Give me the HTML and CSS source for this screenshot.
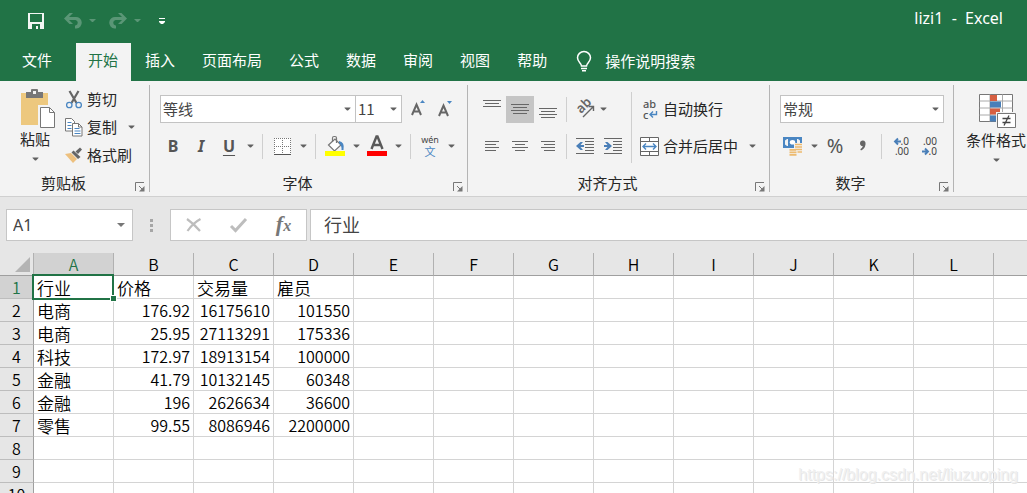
FILE: index.html
```html
<!DOCTYPE html>
<html lang="zh-CN">
<head>
<meta charset="utf-8">
<title>lizi1 - Excel</title>
<link rel="stylesheet" href="styles.css">
</head>
<body>
<svg class="defs" width="0" height="0" aria-hidden="true">
  <symbol id="caret" viewBox="0 0 7 4"><path d="M.5.5h6v.5L4 3.500H3L.5 1z" fill="#606060"/></symbol>
  <symbol id="launch" viewBox="0 0 10 10"><path d="M.5 9V.5H9M4 4l4 4" fill="none" stroke="#777"/><path d="M9.500 4v5.500H4z" fill="#777"/></symbol>
</svg>

<header class="titlebar">
  <div class="quick">
    <button class="qbtn" aria-label="保存"><svg width="16" height="16" viewBox="0 0 16 16"><path d="M0 0h16v16H0z" fill="#f3f6f4"/><path d="M2 1h12v8H2zM4 11h8v5h-2v-3H8v3H4z" fill="#217346"/></svg></button>
    <button class="qbtn undo" aria-label="撤消"><svg width="18" height="16" viewBox="0 0 18 16"><path d="M0 5.500L5.500 0H9L5 4h6.500a5.500 5.500 0 0 1 1 11.500H11V12.500h.5a2.800 2.800 0 0 0 0-5.500H5l4 4H5.500z" fill="#5a9676"/></svg></button>
    <button class="qarrow" aria-label="撤消选项"><svg width="7" height="4" viewBox="0 0 7 4"><path d="M0 0h7L4 3H3z" fill="#5a9676"/></svg></button>
    <button class="qbtn redo" aria-label="恢复"><svg width="18" height="16" viewBox="0 0 18 16"><path d="M18 5.500L12.500 0H9l4 4H6.500a5.500 5.500 0 0 0-1 11.500H7V12.500h-.5a2.800 2.800 0 0 1 0-5.500H13l-4 4h3.500z" fill="#5a9676"/></svg></button>
    <button class="qarrow" aria-label="恢复选项"><svg width="7" height="4" viewBox="0 0 7 4"><path d="M0 0h7L4 3H3z" fill="#5a9676"/></svg></button>
    <button class="qbtn more" aria-label="自定义快速访问工具栏"><svg width="6" height="6" viewBox="0 0 6 6"><path d="M0 0h6v1H0zM0 3h6v1L4 6H2L0 4z" fill="#fff"/></svg></button>
  </div>
  <h1 class="title">lizi1&nbsp; -&nbsp; Excel</h1>
</header>

<nav class="tabs">
  <button class="tab file">文件</button>
  <button class="tab active">开始</button>
  <button class="tab">插入</button>
  <button class="tab">页面布局</button>
  <button class="tab">公式</button>
  <button class="tab">数据</button>
  <button class="tab">审阅</button>
  <button class="tab">视图</button>
  <button class="tab">帮助</button>
  <button class="tell"><svg width="16" height="21" viewBox="0 0 16 21"><path d="M5.500 15c0-3-4-4-4-8.200a6.500 6.200 0 0 1 13 0c0 4.200-4 5.200-4 8.200z" fill="none" stroke="#fff" stroke-width="1.500"/><path d="M5 17.500h6M6 19.800h4" stroke="#fff" stroke-width="1.400"/></svg><span>操作说明搜索</span></button>
</nav>

<main class="ribbon">
  <section class="group clipboard">
    <div class="body">
      <button class="big paste">
        <svg width="40" height="40" viewBox="0 0 40 40"><path d="M6 4h27v32H6z" fill="#edc87e"/><path d="M11 3h5V1q0-1 1-1h5q1 0 1 1v2h5v6H11z" fill="#777"/><path d="M18 2h3v3h-3z" fill="#f3f3f3"/><path d="M23 16h17v24H23z" fill="#f3f3f3"/><path d="M25.500 18.500h9l5 5v15h-14z" fill="#fff" stroke="#777"/><path d="M34.500 18.500v5h5" fill="none" stroke="#777"/></svg>
        <span>粘贴</span><svg class="caret" width="7" height="4"><use href="#caret"/></svg>
      </button>
      <div class="stack">
        <button class="cmd"><span class="ic"><svg width="16" height="19" viewBox="0 0 16 19"><path d="M3.500 1l7 12M12.500 1l-7 12" stroke="#666" stroke-width="2.200"/><circle cx="3.300" cy="15" r="2.700" fill="none" stroke="#4a86c2" stroke-width="1.300"/><circle cx="12.700" cy="15" r="2.700" fill="none" stroke="#4a86c2" stroke-width="1.300"/></svg></span>剪切</button>
        <div class="pair"><button class="cmd"><span class="ic"><svg width="18" height="19" viewBox="0 0 18 19"><path d="M.5.5h6l3 3v9.500h-9z" fill="#fff" stroke="#777"/><path d="M2.500 4.500h4M2.500 7.500h4M2.500 10.500h4" stroke="#4a86c2"/><path d="M7.500 5.500h6l3.500 3.500v9H7.500z" fill="#fff" stroke="#777"/><path d="M13.500 5.500v3.500H17" fill="none" stroke="#777"/><path d="M9.500 10.500h5M9.500 13h6M9.500 15.500h6" stroke="#4a86c2"/></svg></span>复制</button><button class="arrow wide" aria-label="复制选项"><svg width="7" height="4"><use href="#caret"/></svg></button></div>
        <button class="cmd"><span class="ic"><svg width="18" height="16" viewBox="0 0 18 16"><path d="M0 7l6-1 6 6-4 4z" fill="#edc07e"/><path d="M6.500 5.500l2-2 7 6.500-2.500 2z" fill="#666"/><path d="M10.500 4.500L15 .5l2 2-4 4.500z" fill="#666"/></svg></span>格式刷</button>
      </div>
    </div>
    <footer class="foot"><h2>剪贴板</h2><button class="launcher" aria-label="剪贴板设置"><svg width="10" height="10"><use href="#launch"/></svg></button></footer>
  </section>

  <section class="group font">
    <div class="body rows">
      <div class="row">
        <label class="pick fontname"><select aria-label="字体"><option>等线</option></select><svg class="caret" width="7" height="4"><use href="#caret"/></svg></label>
        <label class="pick fontsize"><select aria-label="字号"><option>11</option></select><svg class="caret" width="7" height="4"><use href="#caret"/></svg></label>
        <button class="tool grow" aria-label="增大字号"><svg width="16" height="18" viewBox="0 0 16 18"><path d="M1 15L5.500 4.500L10 15M2.700 11.500h5.600" fill="none" stroke="#666" stroke-width="2"/><path d="M9 3l2.500-3L14 3z" fill="#4a86c2"/></svg></button>
        <button class="tool" aria-label="减小字号"><svg width="16" height="18" viewBox="0 0 16 18"><path d="M0 16L4.500 5.500L9 16M1.700 12.500h5.600" fill="none" stroke="#666" stroke-width="2"/><path d="M8 1h5l-2.500 3z" fill="#4a86c2"/></svg></button>
      </div>
      <div class="row">
        <button class="tool letter" aria-label="加粗">B</button>
        <button class="tool letter ital" aria-label="倾斜">I</button>
        <button class="tool letter under" aria-label="下划线">U</button>
        <button class="arrow" aria-label="下划线选项"><svg width="7" height="4"><use href="#caret"/></svg></button>
        <i class="sep"></i>
        <button class="tool" aria-label="边框"><svg width="17" height="17" viewBox="0 0 17 17"><path d="M0 0h17v17H0z" fill="#fff"/><path d="M0 .5h17M0 8.500h17M.5 0v16M8.500 0v16M16.500 0v16" fill="none" stroke="#777" stroke-dasharray="1 1"/><path d="M0 16.500h17" stroke="#555"/></svg></button>
        <button class="arrow" aria-label="边框选项"><svg width="7" height="4"><use href="#caret"/></svg></button>
        <i class="sep"></i>
        <button class="tool" aria-label="填充颜色"><svg width="20" height="20" viewBox="0 0 20 20"><path d="M3.500 9L10 3l6 6-6.500 6z" fill="#fff" stroke="#777" stroke-width="1.200"/><path d="M7.500 6V2q0-1.500 1.500-1.500h1q1.500 0 1.500 1.500v5" fill="none" stroke="#777" stroke-width="1.200"/><path d="M14 5q6 1 4.500 9h-2q.5-4-2.500-7z" fill="#4a86c2"/><path d="M0 15h20v5H0z" fill="#ff0"/></svg></button>
        <button class="arrow" aria-label="填充颜色选项"><svg width="7" height="4"><use href="#caret"/></svg></button>
        <button class="tool" aria-label="字体颜色"><svg width="20" height="24" viewBox="0 0 20 24"><path d="M4.500 15L9.500 2.500h1L15.500 15M6.500 11h7" fill="none" stroke="#595959" stroke-width="2.400"/><path d="M0 17h20v5H0z" fill="#f00"/></svg></button>
        <button class="arrow" aria-label="字体颜色选项"><svg width="7" height="4"><use href="#caret"/></svg></button>
        <i class="sep"></i>
        <button class="tool wen" aria-label="拼音"><span>wén</span><span class="zi">文</span></button>
        <button class="arrow" aria-label="拼音选项"><svg width="7" height="4"><use href="#caret"/></svg></button>
      </div>
    </div>
    <footer class="foot"><h2>字体</h2><button class="launcher" aria-label="字体设置"><svg width="10" height="10"><use href="#launch"/></svg></button></footer>
  </section>

  <section class="group align">
    <div class="body">
      <div class="rows">
        <div class="row">
          <button class="tool" aria-label="顶端对齐"><svg width="18" height="20" viewBox="0 0 18 20"><path d="M0 1.500h18M2 4.500h14M0 7.500h18" stroke="#666"/></svg></button>
          <button class="tool on" aria-label="垂直居中"><svg width="18" height="20" viewBox="0 0 18 20"><path d="M0 5.500h18M2 8.500h14M0 11.500h18M2 14.500h14" stroke="#666"/></svg></button>
          <button class="tool" aria-label="底端对齐"><svg width="18" height="20" viewBox="0 0 18 20"><path d="M0 9.500h18M2 12.500h14M0 15.500h18M2 18.500h14" stroke="#666"/></svg></button>
          <i class="sep"></i>
          <button class="tool" aria-label="方向"><svg width="20" height="20" viewBox="0 0 20 20"><text x="0" y="0" transform="translate(6 15) rotate(-45)" font-family="Noto Sans" font-size="13" font-weight="600" fill="#666">ab</text><path d="M8 18L18 8M13.500 7.500H18.500V12" fill="none" stroke="#666" stroke-width="1.400"/></svg></button>
          <button class="arrow slim" aria-label="方向选项"><svg width="7" height="4"><use href="#caret"/></svg></button>
        </div>
        <div class="row">
          <button class="tool" aria-label="左对齐"><svg width="14" height="11" viewBox="0 0 14 11"><path d="M0 .5h14M0 3.500h11M0 6.500h14M0 9.500h11" stroke="#666"/></svg></button>
          <button class="tool" aria-label="居中"><svg width="16" height="11" viewBox="0 0 16 11"><path d="M0 .5h16M3 3.500h10M0 6.500h16M3 9.500h10" stroke="#666"/></svg></button>
          <button class="tool" aria-label="右对齐"><svg width="14" height="11" viewBox="0 0 14 11"><path d="M0 .5h14M3 3.500h11M0 6.500h14M3 9.500h11" stroke="#666"/></svg></button>
          <i class="sep"></i>
          <button class="tool" aria-label="减少缩进量"><svg width="18" height="16" viewBox="0 0 18 16"><path d="M0 .5h18M9 3.500h9M9 6.500h9M9 9.500h9M9 12.500h9M0 15.500h18" stroke="#666"/><path d="M0 8l4.500-4H7L4.500 7H8v2H4.500L7 12H4.500z" fill="#4a7fb8"/></svg></button>
          <button class="tool" aria-label="增加缩进量"><svg width="18" height="16" viewBox="0 0 18 16"><path d="M0 .5h18M9 3.500h9M9 6.500h9M9 9.500h9M9 12.500h9M0 15.500h18" stroke="#666"/><path d="M8 8L3.500 4H1l2.500 3H0v2h3.500L1 12h2.500z" fill="#4a7fb8"/></svg></button>
        </div>
      </div>
      <i class="sep tall"></i>
      <div class="rows">
        <div class="row">
          <button class="cmd"><span class="ic wrap"><span>ab</span><span class="second">c<svg width="9" height="7" viewBox="0 0 9 7"><path d="M7.500 0v3.500H1.500M4 .5l-3 3 3 3" fill="none" stroke="#4a86c2" stroke-width="1.400"/></svg></span></span>自动换行</button>
        </div>
        <div class="row">
          <button class="cmd"><span class="ic"><svg width="19" height="19" viewBox="0 0 19 19"><path d="M.5.5h18v18H.5zM.5 4.500h18M.5 14.500h18M9.500 0v4.500M9.500 14.500V19" fill="#fff" stroke="#666"/><path d="M3 9.500h13M6 6.500l-3 3 3 3M13 6.500l3 3-3 3" fill="none" stroke="#4a86c2" stroke-width="1.400"/></svg></span>合并后居中</button>
          <button class="arrow wide" aria-label="合并选项"><svg width="7" height="4"><use href="#caret"/></svg></button>
        </div>
      </div>
    </div>
    <footer class="foot"><h2>对齐方式</h2><button class="launcher" aria-label="对齐设置"><svg width="10" height="10"><use href="#launch"/></svg></button></footer>
  </section>

  <section class="group number">
    <div class="body rows">
      <div class="row">
        <label class="pick numfmt"><select aria-label="数字格式"><option>常规</option></select><svg class="caret" width="7" height="4"><use href="#caret"/></svg></label>
      </div>
      <div class="row">
        <button class="tool" aria-label="会计数字格式"><svg width="20" height="20" viewBox="0 0 20 20"><path d="M0 1h19v11H0z" fill="#4a86c2"/><path d="M2 4.500l2-1.500h11l2 1.500v4l-2 1.500H4L2 8.500z" fill="#f3f3f3"/><path d="M5 2.500h9v8H5z" fill="#4a86c2"/><ellipse cx="9.500" cy="6.200" rx="2.700" ry="2.300" fill="#fff"/><path d="M11 7h8.500v11H14v2H6v-7.500h5z" fill="#f3f3f3"/><path d="M12 8.500h7M12 11h7M12 13.500h7M14.500 16h4.500M6.500 13.800h6.500M6.500 16.300h7M6.500 18.800h7" stroke="#edbb70" stroke-width="1.700"/></svg></button>
        <button class="arrow" aria-label="会计格式选项"><svg width="7" height="4"><use href="#caret"/></svg></button>
        <button class="tool percent" aria-label="百分比样式">%</button>
        <button class="tool" aria-label="千位分隔样式"><svg width="8" height="12" viewBox="0 0 8 12"><path d="M1 3.200Q1.200.5 3.800.5Q7 .8 6.500 4.500Q5.800 9 2 10.500l-.7-1.200Q3.500 8 3.800 6Q1 6 1 3.200z" fill="#666"/></svg></button>
        <i class="sep"></i>
        <button class="tool dec" aria-label="增加小数位数"><span><svg width="7" height="7" viewBox="0 0 7 7"><path d="M1 3.500h6M4 .5l-3 3 3 3" fill="none" stroke="#4a7fb8" stroke-width="1.900"/></svg>.0</span><span>.00</span></button>
        <button class="tool dec" aria-label="减少小数位数"><span>.00</span><span><svg width="7" height="7" viewBox="0 0 7 7"><path d="M0 3.500h6M3 .5l3 3-3 3" fill="none" stroke="#4a7fb8" stroke-width="1.900"/></svg>.0</span></button>
      </div>
    </div>
    <footer class="foot"><h2>数字</h2><button class="launcher" aria-label="数字设置"><svg width="10" height="10"><use href="#launch"/></svg></button></footer>
  </section>

  <section class="group styles">
    <div class="body">
      <button class="big">
        <svg width="40" height="40" viewBox="0 0 40 40"><path d="M3.500 4.500h33v27h-33z" fill="#fff" stroke="#777"/><path d="M3.500 11h33M3.500 18h33M3.500 25h33M14 4.500v27M26.500 4.500v27" stroke="#aaa"/><path d="M14 5h7v6h-7zM14 18.500h10v6H14z" fill="#d65f42"/><path d="M14 11.500h11v6H14zM14 25.500h6v6h-6z" fill="#4a7fb8"/><path d="M20 22h20v17H20z" fill="#f3f3f3"/><path d="M21.500 23.500h18v14h-18z" fill="#fff" stroke="#777"/><path d="M26.500 28.500h8M26.500 32.500h8M33 25.500l-5 10" stroke="#444" stroke-width="1.300"/></svg>
        <span>条件格式</span><svg class="caret" width="7" height="4"><use href="#caret"/></svg>
      </button>
    </div>
  </section>
</main>

<div class="formula">
  <label class="namebox"><input aria-label="名称框" value="A1"><svg width="8" height="4" viewBox="0 0 8 4"><path d="M0 0h8L4 4z" fill="#777"/></svg></label>
  <svg class="dots" width="3" height="13" viewBox="0 0 3 13"><path d="M0 0h3v3H0zM0 5h3v3H0zM0 10h3v3H0z" fill="#a6a6a6"/></svg>
  <div class="fbtns">
    <button class="fbtn" aria-label="取消"><svg width="16" height="14" viewBox="0 0 16 14"><path d="M1 1q7 5 13 12M14.500 1Q7 5 1.500 13" fill="none" stroke="#bdbdbd" stroke-width="2.200"/></svg></button>
    <button class="fbtn" aria-label="输入"><svg width="17" height="14" viewBox="0 0 17 14"><path d="M1 8l4.500 4.500L16 1" fill="none" stroke="#bdbdbd" stroke-width="3"/></svg></button>
    <button class="fbtn fx" aria-label="插入函数"><span>f<small>x</small></span></button>
  </div>
  <input class="finput" aria-label="编辑栏" value="行业">
</div>

<div class="sheet">
  <table class="grid">
    <thead>
      <tr><th class="corner"><svg width="15" height="15" viewBox="0 0 15 15"><path d="M15 0v15H0z" fill="#b4b4b4"/></svg></th><th class="sel">A</th><th>B</th><th>C</th><th>D</th><th>E</th><th>F</th><th>G</th><th>H</th><th>I</th><th>J</th><th>K</th><th>L</th><th></th></tr>
    </thead>
    <tbody>
      <tr><th class="sel">1</th><td class="cur">行业<b class="handle"></b></td><td>价格</td><td>交易量</td><td>雇员</td><td></td><td></td><td></td><td></td><td></td><td></td><td></td><td></td><td></td></tr>
      <tr><th>2</th><td>电商</td><td class="n">176.92</td><td class="n">16175610</td><td class="n">101550</td><td></td><td></td><td></td><td></td><td></td><td></td><td></td><td></td><td></td></tr>
      <tr><th>3</th><td>电商</td><td class="n">25.95</td><td class="n">27113291</td><td class="n">175336</td><td></td><td></td><td></td><td></td><td></td><td></td><td></td><td></td><td></td></tr>
      <tr><th>4</th><td>科技</td><td class="n">172.97</td><td class="n">18913154</td><td class="n">100000</td><td></td><td></td><td></td><td></td><td></td><td></td><td></td><td></td><td></td></tr>
      <tr><th>5</th><td>金融</td><td class="n">41.79</td><td class="n">10132145</td><td class="n">60348</td><td></td><td></td><td></td><td></td><td></td><td></td><td></td><td></td><td></td></tr>
      <tr><th>6</th><td>金融</td><td class="n">196</td><td class="n">2626634</td><td class="n">36600</td><td></td><td></td><td></td><td></td><td></td><td></td><td></td><td></td><td></td></tr>
      <tr><th>7</th><td>零售</td><td class="n">99.55</td><td class="n">8086946</td><td class="n">2200000</td><td></td><td></td><td></td><td></td><td></td><td></td><td></td><td></td><td></td></tr>
      <tr><th>8</th><td></td><td></td><td></td><td></td><td></td><td></td><td></td><td></td><td></td><td></td><td></td><td></td><td></td></tr>
      <tr><th>9</th><td></td><td></td><td></td><td></td><td></td><td></td><td></td><td></td><td></td><td></td><td></td><td></td><td></td></tr>
      <tr><th>10</th><td></td><td></td><td></td><td></td><td></td><td></td><td></td><td></td><td></td><td></td><td></td><td></td><td></td></tr>
    </tbody>
  </table>
  <div class="mark">https://blog.csdn.net/liuzuoping</div>
</div>
</body>
</html>
```
FILE: styles.css
```css
* { box-sizing: border-box; }
body {
  margin: 0;
  height: 100vh;
  display: flex;
  flex-direction: column;
  overflow: hidden;
  background: #fff;
  color: #262626;
  font: 15px/20px "Noto Sans CJK SC", sans-serif;
}
button, input, select {
  margin: 0;
  padding: 0;
  border: 0;
  border-radius: 0;
  background: none;
  color: inherit;
  font: inherit;
}
svg { display: block; flex: none; overflow: visible; }
.defs { position: absolute; }

/* Title bar */
.titlebar {
  flex: none;
  display: flex;
  justify-content: space-between;
  height: 43px;
  padding: 0 24px 2px 28px;
  background: #217346;
  color: #fff;
}
.quick { display: flex; align-items: center; }
.qbtn { display: flex; margin-right: 19px; }
.qbtn:first-child { margin-right: 20px; }
.qbtn.undo, .qbtn.redo { margin-right: 7px; }
.qarrow { display: flex; margin-right: 13px; }
.redo + .qarrow { margin-right: 18px; }
.title { margin: 0; font: 16px/36px "Noto Sans", sans-serif; }

/* Tabs */
.tabs {
  flex: none;
  display: flex;
  height: 38px;
  padding-left: 10px;
  background: #217346;
  color: #fff;
  white-space: nowrap;
}
.tab { flex: none; margin-right: 2px; padding: 0 13px 4px 12px; }
.tab.file { margin-right: 11px; }
.tab.active { background: #f3f3f3; color: #217346; }
.tell { display: flex; align-items: center; gap: 13px; margin-left: 14px; padding-bottom: 2px; flex: none; }

/* Ribbon */
.ribbon {
  flex: none;
  display: flex;
  padding: 4px 0;
  overflow: hidden;
  background: #f3f3f3;
  border-bottom: 1px solid #d0d0d0;
  white-space: nowrap;
}
.group {
  flex: none;
  display: flex;
  flex-direction: column;
  justify-content: space-between;
  height: 107px;
  border-right: 1px solid #b4b4b4;
}
.group.styles { border: 0; }
.clipboard { width: 150px; }
.font { width: 318px; }
.align { width: 302px; }
.number { width: 184px; }
.body { display: flex; padding-left: 10px; }
.rows { display: flex; flex-direction: column; gap: 9px; padding-top: 10px; }
.body.rows { padding-left: 9px; }
.row, .pair { display: flex; align-items: center; height: 28px; }
.foot { display: flex; align-items: flex-end; height: 20px; }
.foot h2 { flex: 1; margin: 0; font-size: 15px; line-height: 18px; font-weight: 400; text-align: center; }
.launcher { display: flex; width: 22px; padding-left: 8px; }
.big { display: flex; flex-direction: column; align-items: center; padding-top: 4px; }
.big .caret { margin-top: 8px; }
.paste { width: 50px; }
.styles .big { margin-left: 2px; padding-top: 5px; }
.stack { display: flex; flex-direction: column; }
.cmd { display: flex; align-items: center; height: 28px; }
.ic { display: flex; justify-content: center; width: 27px; }
.wrap { flex-direction: column; padding-left: 7px; text-align: left; font: 500 11px/11px "Noto Sans", sans-serif; color: #555; }
.second { display: flex; align-items: center; gap: 1px; }
.tool { display: flex; align-items: center; justify-content: center; width: 28px; height: 27px; }
.tool.on { background: #c5c5c5; }
.tool.grow { margin-left: 3px; }
.arrow { display: flex; align-items: center; justify-content: center; width: 14px; height: 27px; }
.arrow.wide { margin-left: 7px; }
.arrow.slim { width: 8px; }
.sep { width: 1px; height: 25px; margin: 0 5px; background: #cfcfcf; }
.align .sep, .number .sep { margin: 0 4px; }
.align .sep.tall { height: 71px; margin-top: 7px; }
.letter { font: 700 16px/24px "Noto Sans", sans-serif; color: #555; }
.ital { font-style: italic; }
.under { text-decoration: underline; text-underline-offset: 3px; text-decoration-thickness: 1px; }
.percent { font: 20px/24px "Noto Sans", sans-serif; color: #555; }
.dec { flex-direction: column; align-items: flex-end; padding-right: 5px; font: 10px/10px "Noto Sans", sans-serif; color: #444; }
.dec span { display: flex; align-items: center; }
.wen { flex-direction: column; font: 9px/10px "Noto Sans", sans-serif; color: #444; }
.zi { font: 11px/12px "Noto Sans CJK SC", sans-serif; color: #4a86c2; }
.pick { display: grid; align-items: center; height: 28px; border: 1px solid #c3c3c3; background: #fff; }
.pick select { grid-area: 1 / 1; width: 100%; height: 26px; padding-left: 2px; appearance: none; color: #444; }
.pick .caret { grid-area: 1 / 1; justify-self: end; margin-right: 4px; pointer-events: none; }
.fontname { width: 196px; margin-left: 1px; }
.fontsize { width: 47px; margin-left: -1px; }
.numfmt { width: 164px; margin-left: 1px; }

/* Formula bar */
.formula {
  flex: none;
  display: flex;
  align-items: center;
  height: 56px;
  padding-left: 6px;
  background: #e6e6e6;
}
.namebox {
  display: flex;
  align-items: center;
  width: 127px;
  height: 32px;
  padding: 0 7px 0 6px;
  border: 1px solid #c6c6c6;
  background: #fff;
}
.namebox input { flex: 1; min-width: 0; font: 16px/20px "Noto Sans", sans-serif; color: #444; }
.dots { margin: 0 17px; }
.fbtns { display: flex; align-items: center; width: 137px; height: 32px; margin-right: 3px; border: 1px solid #c6c6c6; background: #fff; }
.fbtn { flex: 1; display: flex; align-items: center; justify-content: center; height: 30px; }
.fx { font: italic 700 22px/24px "Liberation Serif", serif; color: #777; }
.fx small { font-size: 16px; }
.finput { flex: 1; min-width: 0; height: 32px; padding: 0 0 3px 13px; border: 1px solid #c6c6c6; border-right: 0; background: #fff; font-size: 18px; color: #444; }

/* Worksheet */
.sheet { position: relative; flex: 1; min-height: 0; overflow: hidden; }
.grid { width: 1074px; table-layout: fixed; border-collapse: separate; border-spacing: 0; color: #000; font-size: 17px; font-weight: 350; line-height: 21px; }
.grid th { height: 23px; padding: 1px 0 0; font-size: 16px; font-weight: 350; background: #e6e6e6; border-right: 1px solid #b1b1b1; border-bottom: 1px solid #9f9f9f; }
.grid tbody th { border-right-color: #9f9f9f; border-bottom-color: #bdbdbd; }
.grid .corner { width: 34px; padding-left: 15px; }
.grid .sel { background: #d2d2d2; color: #217346; }
.grid td { height: 23px; padding: 1px 3px 0; border-right: 1px solid #d4d4d4; border-bottom: 1px solid #d4d4d4; white-space: nowrap; }
.grid .n { text-align: right; font-size: 16px; }
.grid .cur { position: relative; }
.cur::after { content: ""; position: absolute; inset: -2px -1px -2px -2px; border: 2px solid #217346; }
.handle { position: absolute; z-index: 1; right: -4px; bottom: -4px; width: 7px; height: 7px; border: 1px solid #fff; background: #217346; }
.mark { position: absolute; right: 9px; bottom: 8px; font: 16px/20px "Liberation Sans", sans-serif; color: #f0f0f0; text-shadow: 1px 1px 0 #e6e6e6; }
```
